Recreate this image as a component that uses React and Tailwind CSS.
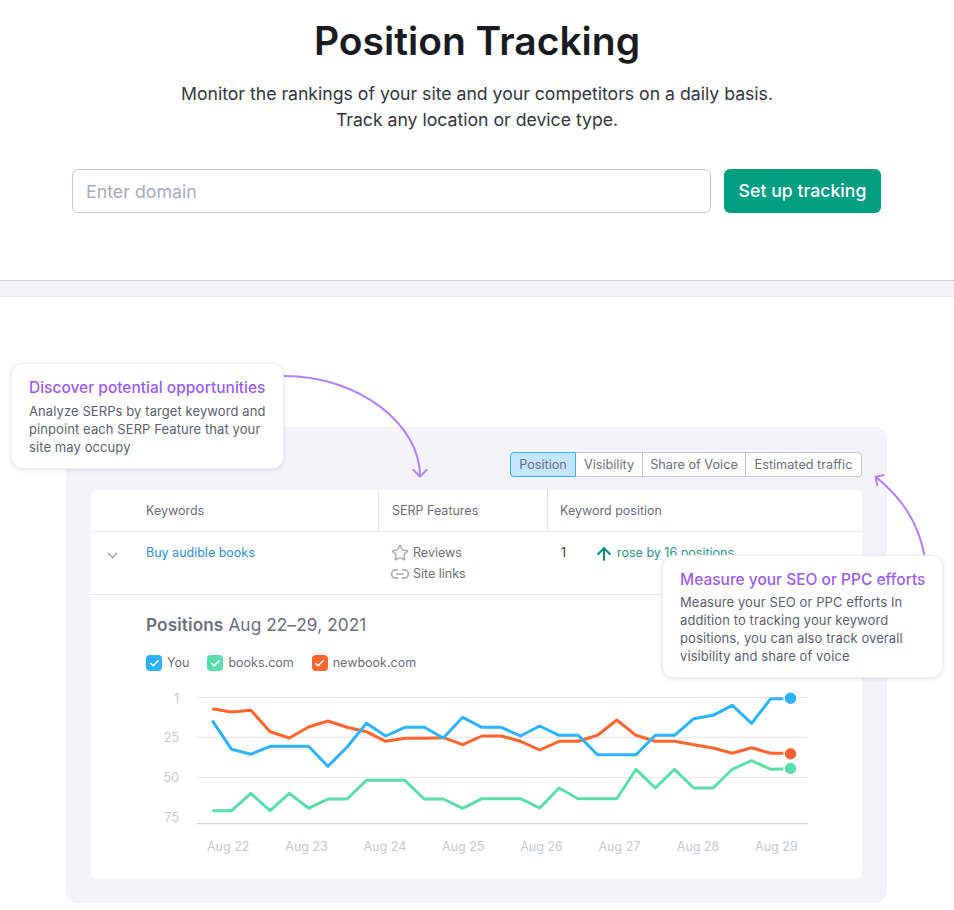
import React from 'react';
import { Star, Link2, ChevronDown, ArrowUp, Check } from 'lucide-react';

const toPoints = (ys) => ys.map((y, i) => `${(212.3 + i * 19.26).toFixed(1)},${y}`).join(' ');

const blue = [720.7, 749.3, 754.3, 746.3, 746.3, 746.3, 766.3, 747, 723.3, 736, 727.3, 727.3, 738, 717.3, 727.3, 727.3, 736, 726, 735.3, 735.3, 754.7, 754.7, 754.7, 735.3, 735.3, 718.7, 715.3, 705.3, 723.3, 698.7, 698.7];
const orange = [708.7, 712, 710.3, 731.7, 738, 727, 721, 727.3, 731.7, 741.3, 738.3, 738.3, 737.7, 744.7, 736, 736, 741.3, 750, 741.3, 741.3, 735.3, 720, 735.3, 741.3, 741.3, 744.7, 748, 753.3, 747.7, 753.3, 753.3];
const green = [810.7, 810.7, 793.3, 810.7, 793.3, 808.3, 799, 799, 780.3, 780.3, 780.3, 799, 799, 808.3, 798.7, 798.7, 798.7, 808, 788, 798.7, 798.7, 798.7, 769.3, 788, 769.3, 788, 788, 769.3, 760.7, 769.3, 768.7];

const tabs = [
  { label: 'Position', width: 'w-[66px]' },
  { label: 'Visibility', width: 'w-[67px]' },
  { label: 'Share of Voice', width: 'w-[103px]' },
  { label: 'Estimated traffic', width: 'w-[116px]' },
];
const days = ['Aug 22', 'Aug 23', 'Aug 24', 'Aug 25', 'Aug 26', 'Aug 27', 'Aug 28', 'Aug 29'];

const Legend = ({ color, label }) => (
  <div className="flex items-center gap-[5px]">
    <span className={`flex h-[16px] w-[16px] items-center justify-center rounded-[4px] ${color}`}>
      <Check size={11} strokeWidth={3.5} className="text-white" />
    </span>
    <span>{label}</span>
  </div>
);

const Chart = () => (
  <svg viewBox="91 680 771 199" className="block h-[199px] w-[771px]">
    {[697.7, 737.3, 777.7].map((y) => (
      <line key={y} x1="196.7" x2="808" y1={y} y2={y} stroke="#e9eaf0" strokeWidth="1.2" />
    ))}
    <line x1="196.7" x2="808" y1="823.7" y2="823.7" stroke="#c4c7cf" strokeWidth="1" />
    {[['1', 702.5], ['25', 742], ['50', 782], ['75', 822]].map(([t, y]) => (
      <text key={t} x="179" y={y} textAnchor="end" fontSize="12.5" fill="#c4c7cf">{t}</text>
    ))}
    {days.map((d, i) => (
      <text key={d} x={207 + i * 78.3} y="851" fontSize="12.5" fill="#c4c7cf">{d}</text>
    ))}
    <polyline points={toPoints(green)} fill="none" stroke="#59ddaa" strokeWidth="3" strokeLinejoin="round" />
    <polyline points={toPoints(orange)} fill="none" stroke="#ff642d" strokeWidth="3" strokeLinejoin="round" />
    <polyline points={toPoints(blue)} fill="none" stroke="#2bb3ff" strokeWidth="3" strokeLinejoin="round" />
    <circle cx="790.5" cy="698.3" r="6.5" fill="#2bb3ff" stroke="#fff" strokeWidth="1.5" />
    <circle cx="790.5" cy="753.7" r="6.5" fill="#ff642d" stroke="#fff" strokeWidth="1.5" />
    <circle cx="790.5" cy="768.5" r="6.5" fill="#59ddaa" stroke="#fff" strokeWidth="1.5" />
  </svg>
);

export default function App() {
  return (
    <div className="relative h-[910px] w-[954px] overflow-hidden bg-white font-['Inter',sans-serif] text-[#191b23]">
      {/* Header */}
      <div className="pb-[67px] pt-[17px] text-center">
        <h1 className="text-[39px] font-semibold leading-[48px]">Position Tracking</h1>
        <p className="mt-[16px] text-[17.65px] leading-[26px] text-[#333640]">
          Monitor the rankings of your site and your competitors on a daily basis.
          <br />
          Track any location or device type.
        </p>
        <div className="mt-[36px] flex gap-[13px] pl-[72px]">
          <input
            placeholder="Enter domain"
            className="h-[44px] w-[639px] rounded-md border border-[#c4c7cf] px-[13px] text-[17.8px] placeholder:text-[#a9abb6]"
          />
          <button className="h-[44px] w-[157px] rounded-md bg-[#009f81] text-[17.7px] font-medium text-white">
            Set up tracking
          </button>
        </div>
      </div>

      <div className="h-[17px] border-b border-t border-b-[#e6e7ed] border-t-[#d1d4db] bg-[#f4f4f8]" />

      {/* Product preview */}
      <div className="ml-[66px] mt-[130px] h-[476px] w-[821px] rounded-xl bg-[#f3f3f9] px-[25px] pt-[25px]">
        <div className="flex justify-end text-center text-[12.7px] leading-[23px] text-[#6c6e79]">
          {tabs.map((tab, i) => (
            <div
              key={tab.label}
              className={
                i === 0
                  ? `rounded-l-[4px] border border-[#2bb3ff] bg-[#c4e5fe] ${tab.width}`
                  : `border border-l-0 border-[#c4c7cf] bg-white last:rounded-r-[4px] ${tab.width}`
              }
            >
              {tab.label}
            </div>
          ))}
        </div>

        <div className="mt-[13px] h-[389px] w-[771px] rounded-md bg-white text-[12.5px] text-[#6c6e79]">
          <div className="grid h-[42px] grid-cols-[288px_169px_1fr] border-b border-[#e6e7ed] leading-[41px]">
            <div className="border-r border-[#e6e7ed] pl-[55px]">Keywords</div>
            <div className="border-r border-[#e6e7ed] pl-[13px]">SERP Features</div>
            <div className="pl-[12px]">Keyword position</div>
          </div>

          <div className="grid h-[63px] grid-cols-[288px_169px_1fr] border-b border-[#e6e7ed] pt-[12px] leading-[18px]">
            <div className="flex">
              <ChevronDown size={17} className="ml-[13px] mt-[3px] text-[#a9abb6]" />
              <span className="ml-[25px] text-[#2b8fd9]">Buy audible books</span>
            </div>
            <div className="pl-[12px]">
              <div className="flex items-center">
                <Star size={18} strokeWidth={2} className="mr-[4px] text-[#a9abb6]" />
                <span>Reviews</span>
              </div>
              <div className="mt-[2px] flex items-center">
                <Link2 size={20} strokeWidth={2} className="-ml-[1px] mr-[3px] text-[#a9abb6]" />
                <span>Site links</span>
              </div>
            </div>
            <div className="flex pl-[13px]">
              <span className="w-[33px] text-[#333640]">1</span>
              <ArrowUp size={20} strokeWidth={2.5} className="mr-[3px] text-[#0e8a7a]" />
              <span className="text-[#1f9b82]">rose by 16 positions</span>
            </div>
          </div>

          <div className="pl-[55px] pt-[19px] text-[17.2px] leading-[22px] tracking-[0.12px]">
            <b className="font-semibold">Positions</b> Aug 22–29, 2021
          </div>
          <div className="mt-[18px] flex gap-[18px] pl-[55px] text-[12.5px] leading-[18px]">
            <Legend color="bg-[#2bb3ff]" label="You" />
            <Legend color="bg-[#59ddaa]" label="books.com" />
            <Legend color="bg-[#ff642d]" label="newbook.com" />
          </div>
          <div className="mt-[8px]">
            <Chart />
          </div>
        </div>
      </div>

      {/* Arrows */}
      <svg viewBox="0 0 954 910" className="pointer-events-none absolute left-0 top-0 h-[910px] w-[954px]" fill="none" stroke="#b47eff" strokeWidth="2">
        <path d="M284 376 C360 376 420 425 420 476" />
        <path d="M412.7 469.3 L420 476.7 L427.3 469.3" />
        <path d="M924.5 556 C918 520 900 497 876 477" />
        <path d="M884.3 475 L875.7 476.7 L877.3 486" />
      </svg>

      {/* Callouts */}
      <div className="absolute left-[11px] top-[363px] h-[106px] w-[273px] rounded-xl border border-[#eeeef3] bg-white pl-[17px] pr-[17px] pt-[14px] shadow-[0_1px_4px_rgba(25,27,35,0.12)]">
        <div className="text-[15.5px] font-medium leading-[20px] text-[#9a5cf0]">Discover potential opportunities</div>
        <p className="mt-[4px] text-[13px] leading-[18px] tracking-[0.09px] text-[#5b5f6e]">
          Analyze SERPs by target keyword and pinpoint each SERP Feature that your site may occupy
        </p>
      </div>
      <div className="absolute left-[662px] top-[555px] h-[123px] w-[281px] rounded-xl border border-[#eeeef3] bg-white pl-[17px] pr-[14px] pt-[14px] shadow-[0_1px_4px_rgba(25,27,35,0.12)]">
        <div className="text-[15.5px] font-medium leading-[20px] text-[#9a5cf0]">Measure your SEO or PPC efforts</div>
        <p className="mt-[3px] text-[13px] leading-[18px] tracking-[0.09px] text-[#5b5f6e]">
          Measure your SEO or PPC efforts In addition to tracking your keyword positions, you can also track overall visibility and share of voice
        </p>
      </div>
    </div>
  );
}
